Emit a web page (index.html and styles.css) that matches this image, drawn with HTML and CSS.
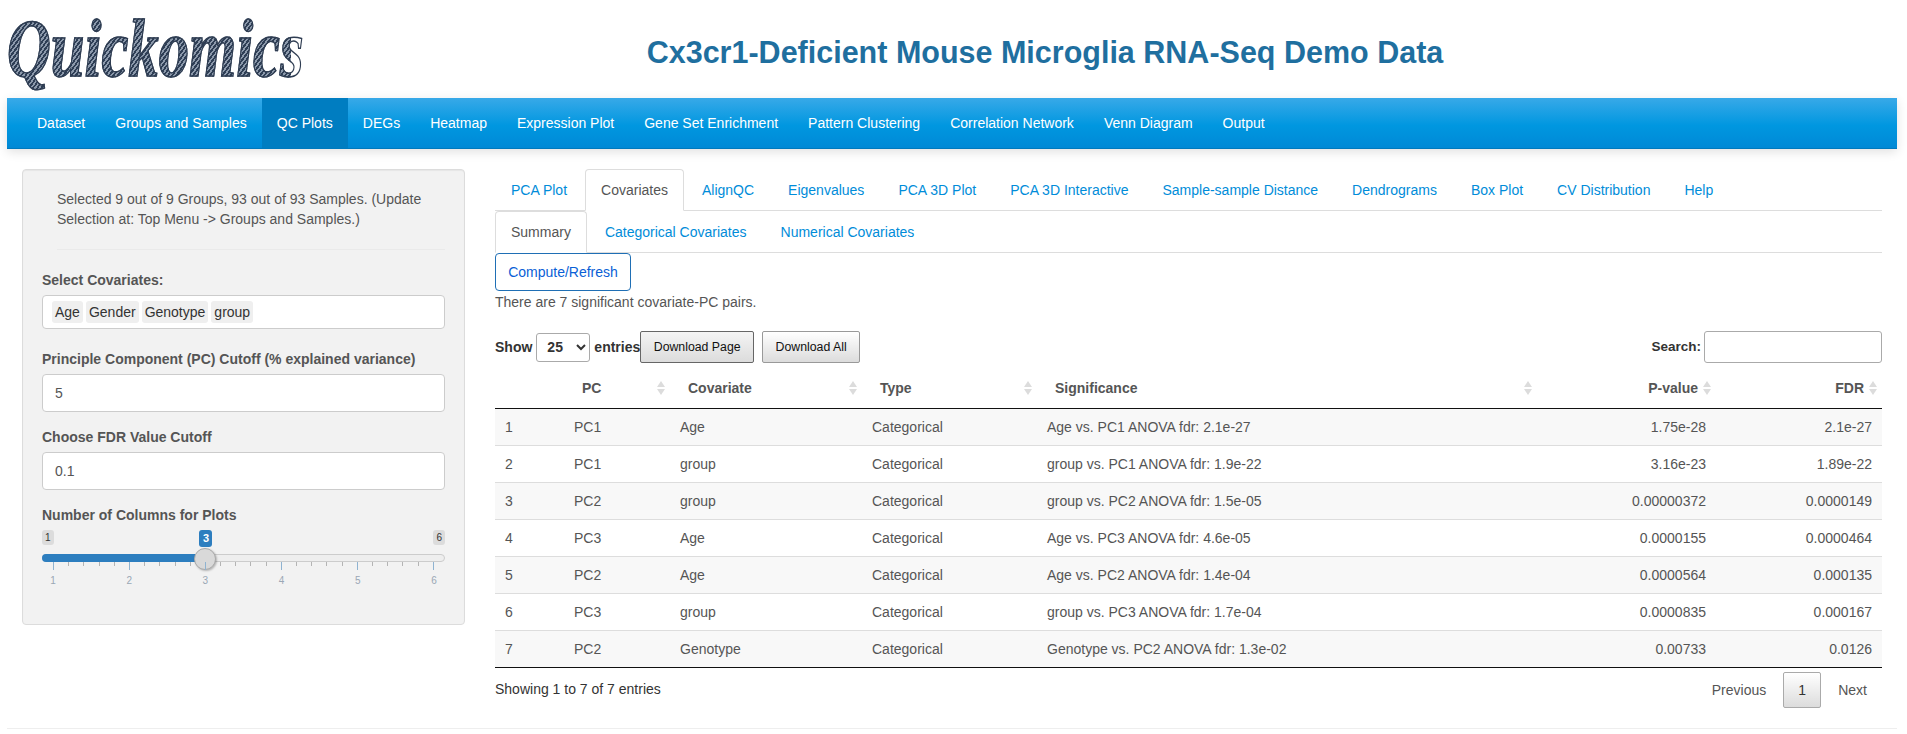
FILE: index.html
```html
<!DOCTYPE html>
<html>
<head>
    <title>Quickomics</title>
    <link rel="stylesheet" href="styles.css">
</head>
<body>

<div class="header">
    <div class="logo">Quickomics</div>
    <h2 class="title">Cx3cr1-Deficient Mouse Microglia RNA-Seq Demo Data</h2>
</div>

<div class="navbar">
    <a>Dataset</a>
    <a>Groups and Samples</a>
    <a class="active">QC Plots</a>
    <a>DEGs</a>
    <a>Heatmap</a>
    <a>Expression Plot</a>
    <a>Gene Set Enrichment</a>
    <a>Pattern Clustering</a>
    <a>Correlation Network</a>
    <a>Venn Diagram</a>
    <a>Output</a>
</div>

<div class="page">
    <div class="side-col">
        <div class="well">
            <p class="selected">Selected 9 out of 9 Groups, 93 out of 93 Samples. (Update Selection at: Top Menu -&gt; Groups and Samples.)</p>
            <hr>
            <label>Select Covariates:</label>
            <div class="input tags"><span>Age</span><span>Gender</span><span>Genotype</span><span>group</span></div>
            <label>Principle Component (PC) Cutoff (% explained variance)</label>
            <div class="input">5</div>
            <label>Choose FDR Value Cutoff</label>
            <div class="input">0.1</div>
            <label>Number of Columns for Plots</label>
            <div class="slider">
                <div class="slider-min">1</div>
                <div class="slider-val">3</div>
                <div class="slider-max">6</div>
                <div class="slider-line"><div class="slider-bar"></div></div>
                <div class="slider-handle"></div>
                <div class="slider-ticks">
                    <i class="major"></i><i></i><i></i><i></i><i></i>
                    <i class="major"></i><i></i><i></i><i></i><i></i>
                    <i class="major"></i><i></i><i></i><i></i><i></i>
                    <i class="major"></i><i></i><i></i><i></i><i></i>
                    <i class="major"></i><i></i><i></i><i></i><i></i>
                    <i class="major"></i>
                </div>
                <div class="slider-nums"><span>1</span><span>2</span><span>3</span><span>4</span><span>5</span><span>6</span></div>
            </div>
        </div>
    </div>

    <div class="main-col">
        <div class="tabs tabs-first">
            <a>PCA Plot</a>
            <a class="active">Covariates</a>
            <a>AlignQC</a>
            <a>Eigenvalues</a>
            <a>PCA 3D Plot</a>
            <a>PCA 3D Interactive</a>
            <a>Sample-sample Distance</a>
            <a>Dendrograms</a>
            <a>Box Plot</a>
            <a>CV Distribution</a>
            <a>Help</a>
        </div>
        <div class="tabs">
            <a class="active">Summary</a>
            <a>Categorical Covariates</a>
            <a>Numerical Covariates</a>
        </div>
        <button class="compute">Compute/Refresh</button>
        <div class="note">There are 7 significant covariate-PC pairs.</div>

        <div class="dt-top">
            <b>Show</b>
            <select class="dt-len"><option>25</option></select>
            <b>entries</b>
            <button class="dt-btn first">Download Page</button>
            <button class="dt-btn">Download All</button>
            <div class="dt-search"><b>Search:</b><input type="text"></div>
        </div>

        <table class="dt">
            <colgroup>
                <col class="c0"><col class="c1"><col class="c2"><col class="c3"><col class="c4"><col class="c5"><col class="c6">
            </colgroup>
            <thead>
                <tr>
                    <th></th>
                    <th class="sort">PC</th>
                    <th class="sort">Covariate</th>
                    <th class="sort">Type</th>
                    <th class="sort">Significance</th>
                    <th class="sort num">P-value</th>
                    <th class="sort num">FDR</th>
                </tr>
            </thead>
            <tbody>
                <tr><td>1</td><td>PC1</td><td>Age</td><td>Categorical</td><td>Age vs. PC1 ANOVA fdr: 2.1e-27</td><td class="num">1.75e-28</td><td class="num">2.1e-27</td></tr>
                <tr><td>2</td><td>PC1</td><td>group</td><td>Categorical</td><td>group vs. PC1 ANOVA fdr: 1.9e-22</td><td class="num">3.16e-23</td><td class="num">1.89e-22</td></tr>
                <tr><td>3</td><td>PC2</td><td>group</td><td>Categorical</td><td>group vs. PC2 ANOVA fdr: 1.5e-05</td><td class="num">0.00000372</td><td class="num">0.0000149</td></tr>
                <tr><td>4</td><td>PC3</td><td>Age</td><td>Categorical</td><td>Age vs. PC3 ANOVA fdr: 4.6e-05</td><td class="num">0.0000155</td><td class="num">0.0000464</td></tr>
                <tr><td>5</td><td>PC2</td><td>Age</td><td>Categorical</td><td>Age vs. PC2 ANOVA fdr: 1.4e-04</td><td class="num">0.0000564</td><td class="num">0.000135</td></tr>
                <tr><td>6</td><td>PC3</td><td>group</td><td>Categorical</td><td>group vs. PC3 ANOVA fdr: 1.7e-04</td><td class="num">0.0000835</td><td class="num">0.000167</td></tr>
                <tr><td>7</td><td>PC2</td><td>Genotype</td><td>Categorical</td><td>Genotype vs. PC2 ANOVA fdr: 1.3e-02</td><td class="num">0.00733</td><td class="num">0.0126</td></tr>
            </tbody>
        </table>

        <div class="dt-bottom">
            <div class="dt-info">Showing 1 to 7 of 7 entries</div>
            <div class="dt-pages"><a>Previous</a><a class="current">1</a><a>Next</a></div>
        </div>
    </div>
</div>

<hr class="foot">

</body>
</html>
```

FILE: styles.css
```css
html, body { height: 734px; overflow: hidden; }
body { margin: 0; font-family: "Liberation Sans", Arial, sans-serif; font-size: 14px; line-height: 20px; color: #555; background-color: #fff; }

.header { display: flex; align-items: center; height: 98px; padding-left: 7px; }
.logo { flex: none; width: 384px; height: 92px; margin-right: -84px; transform: scaleX(0.74); transform-origin: left center; font-family: "Liberation Serif", serif; font-style: italic; font-weight: bold; font-size: 82px; line-height: 92px; white-space: nowrap; color: transparent; background: repeating-linear-gradient(135deg, #2e3e55 0 2px, #8c99ab 2px 4px); -webkit-background-clip: text; background-clip: text; -webkit-text-stroke: 1.5px #2f3d52; }
.title { flex: 1; margin: 0; padding: 5px 124px 0 0; text-align: center; font-size: 30.5px; line-height: 36px; font-weight: bold; color: #1f6f9f; }

.navbar { display: flex; height: 51px; margin: 0 10px 0 7px; padding-left: 15px; background-image: linear-gradient(#38a9e8, #0097e0 55%, #0089d6); border-bottom: 1px solid #0079bd; box-sizing: border-box; box-shadow: 0 3px 10px rgba(0,0,0,0.12); }
.navbar a { padding: 15px; color: #fff; }
.navbar a.active { background-color: #007dc1; }

.page { display: flex; padding: 20px 8px 0 7px; }
.side-col { width: 473px; padding: 0 15px; box-sizing: border-box; }
.main-col { width: 1387px; margin-left: 15px; }

.well { height: 456px; padding: 19px; box-sizing: border-box; background-color: #f2f2f2; border: 1px solid #dcdcdc; border-radius: 4px; box-shadow: inset 0 1px 1px rgba(0,0,0,0.05); }
.selected { margin: 0 0 0 15px; }
.well hr { margin: 20px 0 20px 15px; border: 0; border-top: 1px solid #eaeaea; }
.well label { display: block; font-weight: bold; margin-bottom: 5px; }
.input { height: 38px; margin-bottom: 15px; padding: 8px 12px; box-sizing: border-box; background-color: #fff; border: 1px solid #ccc; border-radius: 4px; color: #555; }
.tags { display: flex; gap: 3px; height: 34px; padding: 5px 9px; margin-bottom: 20px; color: #333; }
.tags span { padding: 0 3px; background-color: #efefef; border-radius: 3px; line-height: 22px; }

.slider { position: relative; height: 60px; }
.slider-min, .slider-max, .slider-val { position: absolute; top: 0; font-size: 10px; line-height: 15px; padding: 0 3px; border-radius: 3px; background-color: #dcdcdc; color: #333; }
.slider-min { left: 0; }
.slider-max { right: 0; }
.slider-val { left: 157px; height: 17px; line-height: 17px; padding: 0 3px 0 4px; background-color: #2d7ebf; color: #fff; font-size: 11px; font-weight: bold; }
.slider-line { position: absolute; top: 24px; left: 0; right: 0; height: 6px; background-color: #eee; border: 1px solid #ccc; border-radius: 4px; }
.slider-bar { width: 162px; height: 8px; margin: -1px 0 0 -1px; background-color: #2d7ebf; border-radius: 4px 0 0 4px; }
.slider-handle { position: absolute; top: 18px; left: 152px; width: 20px; height: 20px; background-color: #d9d9d9; border: 1px solid #aaa; border-radius: 50%; box-shadow: 1px 1px 2px rgba(0,0,0,0.25); }
.slider-ticks { position: absolute; top: 32px; left: 11px; right: 11px; display: flex; justify-content: space-between; align-items: flex-start; }
.slider-ticks i { display: block; width: 1px; height: 4px; background-color: #b4b4b4; }
.slider-ticks i.major { height: 8px; background-color: #8fb3d1; }
.slider-nums { position: absolute; top: 45px; left: 0; right: 0; padding: 0 8px; display: flex; justify-content: space-between; font-size: 10px; line-height: 12px; color: #9aa7b5; }
.slider-nums span { width: 6px; text-align: center; }

.tabs { display: flex; height: 42px; box-sizing: border-box; border-bottom: 1px solid #ddd; }
.tabs a { height: 41px; margin-right: 2px; padding: 10px 15px; box-sizing: border-box; border: 1px solid transparent; border-radius: 4px 4px 0 0; color: #008cd9; white-space: nowrap; }
.tabs a.active { height: 42px; background-color: #fff; border-color: #ddd; border-bottom-color: #fff; color: #555; }

.compute { display: block; width: 136px; height: 38px; padding: 0; font: 14px "Liberation Sans", Arial, sans-serif; color: #0a5fd6; background-color: #fff; border: 1px solid #1f6fb5; border-radius: 4px; }
.note { margin-top: 1px; }

.dt-top { display: flex; align-items: center; height: 32px; margin-top: 19px; color: #333; }
.dt-len { width: 54px; height: 29px; margin: 0 4px; padding-left: 6px; font: bold 14px "Liberation Sans", Arial, sans-serif; color: #333; background-color: #fff; border: 1px solid #aaa; border-radius: 3px; }
.dt-btn { height: 32px; padding: 0 12.5px; margin-right: 8px; font: 12.3px "Liberation Sans", Arial, sans-serif; color: #111; background-image: linear-gradient(#fff, #dcdcdc); border: 1px solid #999; border-radius: 2px; }
.dt-btn.first { margin-left: 0; background-image: linear-gradient(#f4f4f4, #dcdcdc); border-color: #666; }
.dt-search { margin-left: auto; display: flex; align-items: center; gap: 3px; font-size: 13.5px; }
.dt-search input { width: 178px; height: 32px; padding: 0; box-sizing: border-box; border: 1px solid #aaa; border-radius: 3px; }

.dt { width: 1387px; margin-top: 5px; border-collapse: collapse; table-layout: fixed; border-bottom: 1px solid #111; font-size: 14px; }
.c0 { width: 69px; } .c1 { width: 106px; } .c2 { width: 192px; } .c3 { width: 175px; } .c4 { width: 500px; } .c5 { width: 179px; } .c6 { width: 166px; }
.dt th { position: relative; height: 40px; padding: 0 18px; text-align: left; font-weight: bold; color: #555; border-bottom: 1px solid #111; box-sizing: border-box; }
.dt th.num { text-align: right; }
.dt th.sort::before, .dt th.sort::after { content: ""; position: absolute; right: 5px; border-left: 4px solid transparent; border-right: 4px solid transparent; }
.dt th.sort::before { top: 13px; border-bottom: 6px solid #dcdcdc; }
.dt th.sort::after { top: 21px; border-top: 6px solid #dcdcdc; }
.dt td { height: 37px; padding: 0 10px; box-sizing: border-box; border-top: 1px solid #ddd; color: #555; }
.dt tbody tr:first-child td { border-top: 0; }
.dt tbody tr:nth-child(odd) td { background-color: #f8f8f8; }
.dt td.num { text-align: right; }

.dt-bottom { display: flex; justify-content: space-between; margin-top: 4px; font-size: 14px; color: #333; }
.dt-info { padding-top: 7px; }
.dt-pages { display: flex; align-items: center; color: #555; }
.dt-pages a { padding: 7px 17px; }
.dt-pages a:last-child { padding-right: 15px; }
.dt-pages a.current { width: 38px; height: 36px; padding: 7px 0; box-sizing: border-box; text-align: center; border: 1px solid #aaa; border-radius: 2px; background-image: linear-gradient(#fff, #dcdcdc); color: #333; }

.foot { position: absolute; top: 728px; left: 7px; width: 1890px; margin: 0; border: 0; border-top: 1px solid #eee; }
```
